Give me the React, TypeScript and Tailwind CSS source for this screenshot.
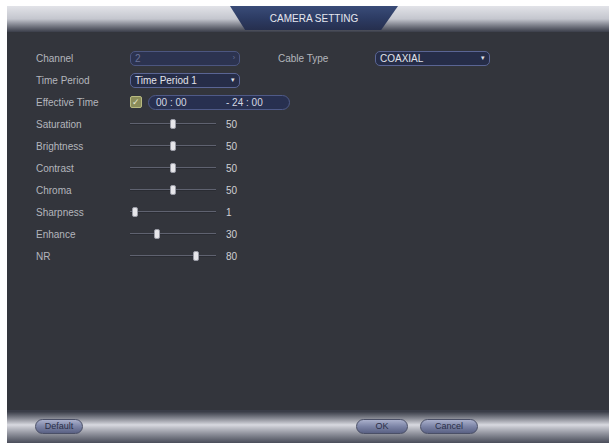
import React from "react";

const font = { fontFamily: '"Liberation Sans", Arial, sans-serif' };

function Slider({ value }: { value: number }) {
  return (
    <div className="flex items-center gap-[10px]">
      <div className="relative w-[86px] h-[12px] flex items-center">
        <div className="w-full h-[2px] bg-[#5f6270] border-b border-[#2a2c33]" />
        <div
          className="absolute top-[1px] w-[6px] h-[10px] rounded-[2px] bg-[#e6e6ea] border border-[#9a9ca6]"
          style={{ left: `${1 + value * 0.78}px` }}
        />
      </div>
      <span className="text-[10px] text-[#d0d0d4]">{value}</span>
    </div>
  );
}

function Row({ label, children }: { label: string; children?: React.ReactNode }) {
  return (
    <div className="flex items-center h-[22px]">
      <div className="w-[94px] text-[10px] text-[#b4b5bc]">{label}</div>
      {children}
    </div>
  );
}

function Select({ text, w, disabled }: { text: string; w: string; disabled?: boolean }) {
  return (
    <div
      className={`${w} h-[15px] rounded-[5px] border flex items-center justify-between px-[4px] text-[10px] ${
        disabled
          ? "border-[#4c5680] bg-[#2c3350] text-[#6b7398]"
          : "border-[#5a6594] bg-[#262d48] text-[#e2e3ea]"
      }`}
    >
      <span>{text}</span>
      <span className={`text-[7px] ${disabled ? "text-[#6b7398]" : "text-[#e2e3ea]"}`}>{disabled ? "›" : "▾"}</span>
    </div>
  );
}

function Btn({ label, w }: { label: string; w: string }) {
  return (
    <div
      className={`${w} h-[15px] rounded-full border border-[#4a4f66] bg-gradient-to-b from-[#aab0cc] via-[#7c84a6] to-[#5a6184] flex items-center justify-center text-[9px] text-[#2a2f48]`}
    >
      {label}
    </div>
  );
}

export default function App() {
  return (
    <div className="w-[609px] h-[443px] bg-white pl-[7px] pt-[6px] overflow-hidden" style={font}>
      <div className="w-full h-full flex flex-col bg-[#33353c]">
        {/* Top bar */}
        <div className="h-[26px] bg-gradient-to-b from-[#e2e3e8] via-[#c4c6ce] to-[#3b3e4a] flex justify-center">
          <div className="w-[168px] h-[24px] bg-gradient-to-b from-[#3a4c78] via-[#2d3c64] to-[#262f4e] [clip-path:polygon(0_0,100%_0,90%_100%,9%_100%)] flex items-center justify-center text-[10px] text-[#e6e7ee] ml-[12px]">
            CAMERA SETTING
          </div>
        </div>
        {/* Content */}
        <div className="flex-1 pl-[29px] pt-[15px] flex flex-col">
          <Row label="Channel">
            <Select text="2" w="w-[110px]" disabled />
            <div className="ml-[38px] w-[97px] text-[10px] text-[#b4b5bc]">Cable Type</div>
            <Select text="COAXIAL" w="w-[115px]" />
          </Row>
          <Row label="Time Period">
            <Select text="Time Period 1" w="w-[110px]" />
          </Row>
          <Row label="Effective Time">
            <div className="flex items-center gap-[6px]">
              <div className="w-[12px] h-[12px] rounded-[2px] bg-[#8a8c5a] border border-[#b8ba80] flex items-center justify-center text-[9px] leading-none text-[#e8e8d0]">
                ✓
              </div>
              <div className="w-[142px] h-[15px] rounded-full border border-[#4f5a88] bg-[#283050] flex items-center text-[10px] text-[#d6d8e2] pl-[7px]">
                <span className="w-[70px]">00 : 00</span>
                <span>- 24 : 00</span>
              </div>
            </div>
          </Row>
          <Row label="Saturation"><Slider value={50} /></Row>
          <Row label="Brightness"><Slider value={50} /></Row>
          <Row label="Contrast"><Slider value={50} /></Row>
          <Row label="Chroma"><Slider value={50} /></Row>
          <Row label="Sharpness"><Slider value={1} /></Row>
          <Row label="Enhance"><Slider value={30} /></Row>
          <Row label="NR"><Slider value={80} /></Row>
        </div>
        {/* Bottom bar */}
        <div className="h-[33px] bg-gradient-to-b from-[#3a3d48] from-[5%] via-[#d8d9e0] via-[45%] to-[#4a4d5a] flex items-center pl-[28px] pr-[131px]">
          <Btn label="Default" w="w-[48px]" />
          <div className="flex-1" />
          <Btn label="OK" w="w-[52px]" />
          <div className="w-[12px]" />
          <Btn label="Cancel" w="w-[58px]" />
        </div>
      </div>
    </div>
  );
}
